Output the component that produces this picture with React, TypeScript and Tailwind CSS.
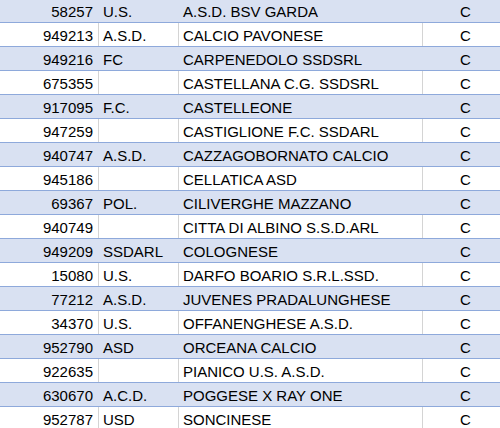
import React from "react";

const rows: [string, string, string][] = [
  ["58257", "U.S.", "A.S.D. BSV GARDA"],
  ["949213", "A.S.D.", "CALCIO PAVONESE"],
  ["949216", "FC", "CARPENEDOLO SSDSRL"],
  ["675355", "", "CASTELLANA C.G. SSDSRL"],
  ["917095", "F.C.", "CASTELLEONE"],
  ["947259", "", "CASTIGLIONE F.C. SSDARL"],
  ["940747", "A.S.D.", "CAZZAGOBORNATO CALCIO"],
  ["945186", "", "CELLATICA ASD"],
  ["69367", "POL.", "CILIVERGHE MAZZANO"],
  ["940749", "", "CITTA DI ALBINO S.S.D.ARL"],
  ["949209", "SSDARL", "COLOGNESE"],
  ["15080", "U.S.", "DARFO BOARIO S.R.L.SSD."],
  ["77212", "A.S.D.", "JUVENES PRADALUNGHESE"],
  ["34370", "U.S.", "OFFANENGHESE A.S.D."],
  ["952790", "ASD", "ORCEANA CALCIO"],
  ["922635", "", "PIANICO U.S. A.S.D."],
  ["630670", "A.C.D.", "POGGESE X RAY ONE"],
  ["952787", "USD", "SONCINESE"],
];

export default function App() {
  return (
    <div
      className="w-[500px] h-[428px] overflow-hidden bg-white text-black text-[15px]"
      style={{ fontFamily: '"Liberation Sans", Arial, sans-serif' }}
    >
      <div className="-mt-px">
        {rows.map(([code, kind, name], i) => {
          const band = i % 2 === 0;
          const line = band ? "border-[#d9e1f2]" : "border-[#d4d4d4]";
          return (
            <div
              key={code}
              className={`flex h-[24px] border-b border-[#8ea9db] leading-none ${
                band ? "bg-[#d9e1f2]" : "bg-white"
              }`}
            >
              <div className={`w-[99px] shrink-0 flex items-end justify-end pr-[5px] pb-[3px] border-r ${line}`}>
                {code}
              </div>
              <div className={`w-[80px] shrink-0 flex items-end pl-[4px] pb-[3px] border-r ${line}`}>
                {kind}
              </div>
              <div className={`w-[244px] shrink-0 flex items-end pl-[4px] pb-[3px] border-r ${line}`}>
                {name}
              </div>
              <div className="flex-1 flex items-end pl-[37px] pb-[3px]">C</div>
            </div>
          );
        })}
      </div>
    </div>
  );
}
